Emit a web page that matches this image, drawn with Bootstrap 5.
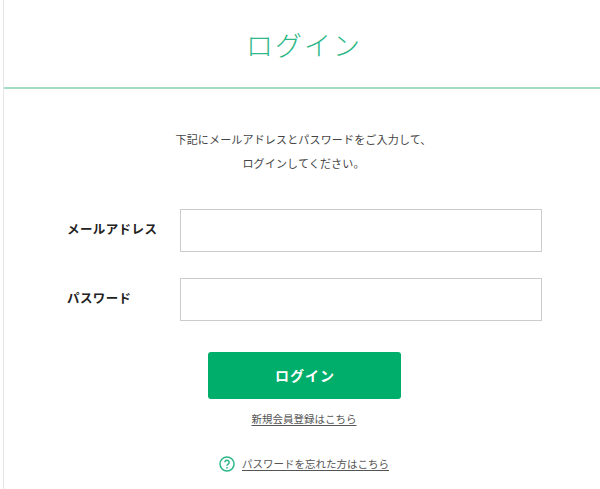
<!DOCTYPE html>
<html lang="ja">
<head>
<meta charset="utf-8">
<title>ログイン</title>
<link href="https://cdn.jsdelivr.net/npm/bootstrap@5.3.0/dist/css/bootstrap.min.css" rel="stylesheet">
<style>
html,body{height:489px;overflow:hidden;background:#fff}
body{font-family:"Noto Sans CJK JP","Noto Sans",sans-serif;color:#333;border-left:1px solid #e6e6e6;margin-left:3px}
.login-head{height:89px;border-bottom:2px solid #a5dcc4;display:flex;align-items:center;justify-content:center;padding-top:4px;padding-left:4px}
.login-title{font-size:27px;font-weight:300;letter-spacing:2px;color:#2eb888;margin:0;line-height:1.2}
.login-lead{padding:38px 0 0 3px;font-size:11px;letter-spacing:.17px;line-height:24px;color:#444;margin:0;text-align:center;height:120px}
.field-row{display:flex;align-items:center;height:43px;margin-bottom:26px;padding-left:63px}
.field-label{width:113px;font-size:12.5px;font-weight:700;letter-spacing:.4px;color:#222;flex:none;margin:0;padding-bottom:2px}
.field-input{width:362px;height:43px;border:1px solid #ccc;border-radius:0;flex:none}
.btn-login{width:193px;height:47px;background:#00ae6b;border:0;border-radius:3px;color:#fff;font-weight:700;font-size:14px;letter-spacing:1px;margin:31px 0 0 204px;display:block;padding:0 0 0 1px}
.btn-login:hover{background:#00ae6b;color:#fff}
.sub-link{font-size:10.5px;color:#555;text-decoration:underline;text-underline-offset:2px}
.link-one{text-align:center;margin-top:8px;line-height:18px;padding-left:4px}
.link-two{display:flex;align-items:center;justify-content:center;gap:7px;margin-top:27px;line-height:18px;padding-left:4px}
</style>
</head>
<body>
<header class="login-head"><h1 class="login-title">ログイン</h1></header>
<main>
<p class="login-lead">下記にメールアドレスとパスワードをご入力して、<br>ログインしてください。</p>
<form>
<div class="field-row"><label class="field-label" for="m">メールアドレス</label><input id="m" class="form-control field-input" type="text"></div>
<div class="field-row mb-0"><label class="field-label" for="p">パスワード</label><input id="p" class="form-control field-input" type="password"></div>
<button type="button" class="btn btn-login">ログイン</button>
</form>
<div class="link-one"><a class="sub-link" href="#">新規会員登録はこちら</a></div>
<div class="link-two">
<svg width="16" height="16" viewBox="0 0 16 16" fill="none" aria-hidden="true"><circle cx="8" cy="8" r="7" stroke="#2eb888" stroke-width="1.5"/><path d="M5.9 6.3a2.1 2.1 0 1 1 3.2 1.8c-.7.4-1.1.8-1.1 1.6" stroke="#2eb888" stroke-width="1.5"/><circle cx="8" cy="11.8" r=".9" fill="#2eb888"/></svg>
<a class="sub-link" href="#">パスワードを忘れた方はこちら</a></div>
</main>
<script src="https://cdn.jsdelivr.net/npm/bootstrap@5.3.0/dist/js/bootstrap.bundle.min.js"></script>
</body>
</html>
